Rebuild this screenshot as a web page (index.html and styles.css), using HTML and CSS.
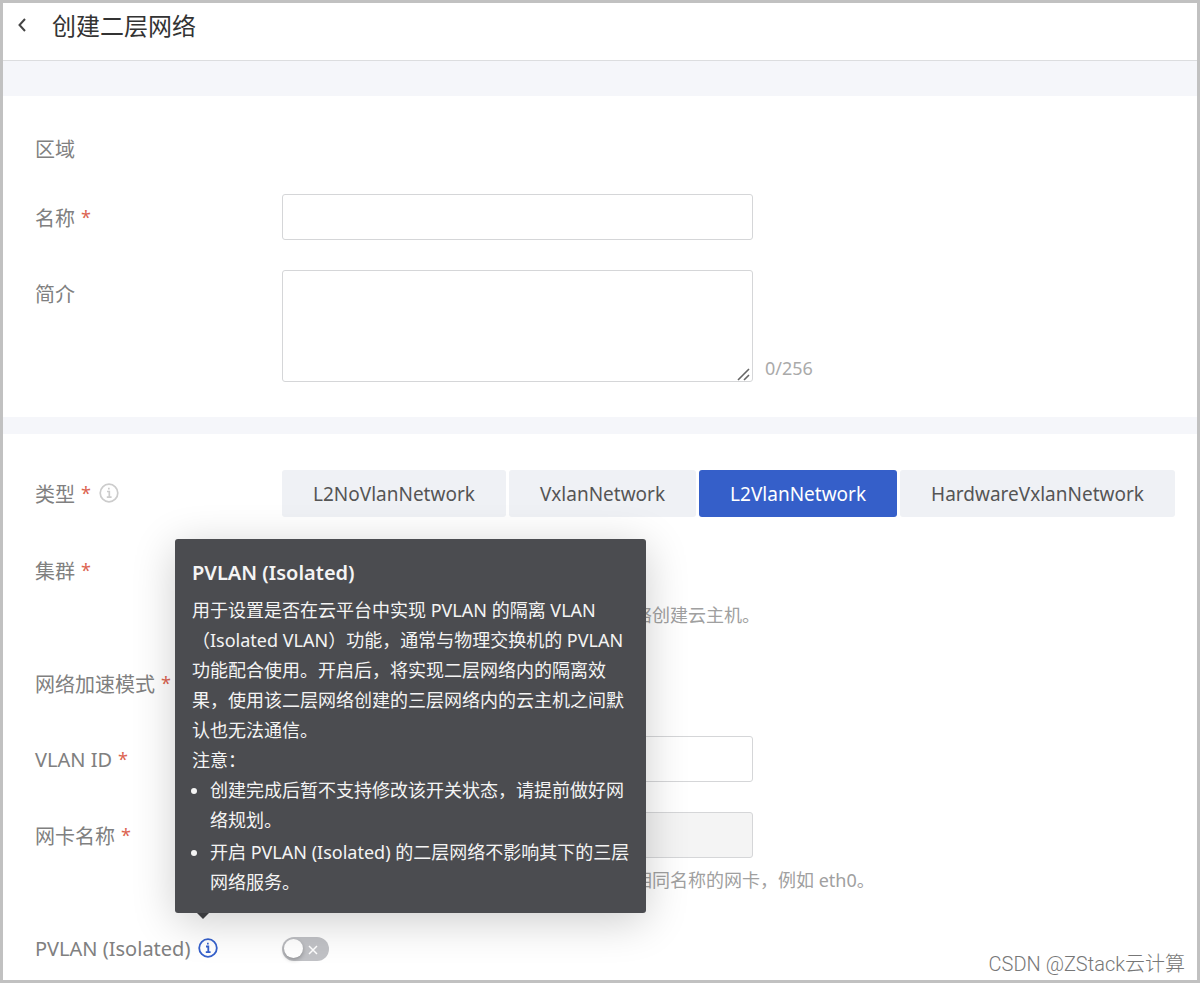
FILE: index.html
```html
<!DOCTYPE html>
<html lang="zh-CN">
<head>
<meta charset="utf-8">
<title>创建二层网络</title>
<link rel="stylesheet" href="styles.css">
</head>
<body>
<div class="page">
  <header class="header">
    <button class="back" type="button" aria-label="返回">
      <svg width="10" height="16" viewBox="0 0 10 16" fill="none" stroke="#444" stroke-width="2"><path d="M8 2 2.500 8 8 14"/></svg>
    </button>
    <h1 class="title">创建二层网络</h1>
  </header>
  <form class="form">
    <section class="section">
      <div class="row row-static">
        <span class="label">区域</span>
      </div>
      <div class="row">
        <label class="label" for="name">名称<span class="required">*</span></label>
        <div><input class="field" id="name" type="text"></div>
      </div>
      <div class="row">
        <label class="label" for="intro">简介</label>
        <div class="area-line">
          <div class="area-box">
            <textarea class="field area" id="intro"></textarea>
            <svg class="grip" width="14" height="14" viewBox="0 0 14 14" stroke="#666" stroke-width="1.600"><path d="M1 13 12 2M7 13l5-5"/></svg>
          </div>
          <span class="counter">0/256</span>
        </div>
      </div>
    </section>
    <section class="section">
      <div class="row">
        <span class="label">类型<span class="required">*</span>
          <svg class="info" width="20" height="20" viewBox="0 0 20 20" fill="none" stroke="#ccc" stroke-width="1.700"><circle cx="10" cy="10" r="8.800"/><path d="M8 8.500h2.300v5.500M7.800 14.200h4.800"/><path d="M9 5.700h1.700"/></svg>
        </span>
        <div class="types">
          <button class="type" type="button">L2NoVlanNetwork</button>
          <button class="type" type="button">VxlanNetwork</button>
          <button class="type type-active" type="button">L2VlanNetwork</button>
          <button class="type" type="button">HardwareVxlanNetwork</button>
        </div>
      </div>
      <div class="row">
        <span class="label">集群<span class="required">*</span></span>
        <div class="stack">
          <p class="hint">络创建云主机。</p>
        </div>
      </div>
      <div class="row">
        <span class="label">网络加速模式<span class="required">*</span></span>
      </div>
      <div class="row">
        <label class="label" for="vlan">VLAN ID<span class="required">*</span></label>
        <div><input class="field" id="vlan" type="text"></div>
      </div>
      <div class="row">
        <label class="label" for="nic">网卡名称<span class="required">*</span></label>
        <div class="stack">
          <input class="field" id="nic" type="text" disabled>
          <p class="hint">相同名称的网卡，例如 eth0。</p>
        </div>
      </div>
      <div class="row row-tip">
        <label class="label" for="pvlan">PVLAN (Isolated)
          <svg class="info" width="20" height="20" viewBox="0 0 20 20" fill="none" stroke="#3560cb" stroke-width="1.800"><circle cx="10" cy="10" r="8.800"/><path d="M8 8.500h2.300v5.500M7.800 14.200h4.800"/><path d="M9 5.700h1.700"/></svg>
        </label>
        <div class="switch-line">
          <span class="switch-box">
            <input class="switch" id="pvlan" type="checkbox" role="switch">
            <svg class="cross" width="10" height="10" viewBox="0 0 10 10" stroke="#fff" stroke-width="1.500"><path d="M1 1l8 8M9 1 1 9"/></svg>
          </span>
        </div>
        <div class="tip" role="tooltip">
          <h2 class="tip-title">PVLAN (Isolated)</h2>
          <p class="tip-text">用于设置是否在云平台中实现 PVLAN 的隔离 VLAN<br>（Isolated VLAN）功能，通常与物理交换机的 PVLAN<br>功能配合使用。开启后，将实现二层网络内的隔离效<br>果，使用该二层网络创建的三层网络内的云主机之间默<br>认也无法通信。<br>注意：</p>
          <ul class="tip-list">
            <li>创建完成后暂不支持修改该开关状态，请提前做好网<br>络规划。</li>
            <li>开启 PVLAN (Isolated) 的二层网络不影响其下的三层<br>网络服务。</li>
          </ul>
        </div>
      </div>
    </section>
  </form>
  <div class="watermark">CSDN @ZStack云计算</div>
</div>
</body>
</html>
```
FILE: styles.css
```css
* {
  box-sizing: border-box;
}

body {
  margin: 0;
  font-family: "Noto Sans", "Noto Sans CJK SC", sans-serif;
  font-size: 20px;
  color: #808080;
}

button,
input,
textarea {
  font: inherit;
}

.page {
  position: relative;
  display: flex;
  flex-direction: column;
  min-height: 100vh;
  border: 3px solid #c1c1c1;
  background: #fff;
}

.header {
  display: flex;
  align-items: center;
  gap: 20px;
  height: 58px;
  padding: 0 14px 12px;
  border-bottom: 1px solid #dcdddf;
}

.back {
  display: flex;
  padding: 0 0 2px;
  border: 0;
  background: none;
}

.title {
  margin: 0;
  padding-left: 5px;
  font-size: 24px;
  font-weight: 400;
  line-height: 32px;
  color: #333;
}

.form {
  display: flex;
  flex-direction: column;
  gap: 17px;
  flex: 1;
  padding-top: 35px;
  background: #f5f6fa;
}

.section {
  display: flex;
  flex-direction: column;
  gap: 30px;
  padding: 36px 25px 35px 32px;
  background: #fff;
}

.section:last-child {
  flex: 1;
  padding-bottom: 8px;
}

.row {
  display: grid;
  grid-template-columns: 247px 1fr;
  align-items: start;
}

.row-static .label {
  height: 32px;
}

.row-tip {
  position: relative;
}

.label {
  display: flex;
  align-items: center;
  height: 46px;
  white-space: nowrap;
}

.required {
  margin-left: 6px;
  font-size: 18px;
  color: #dc6450;
}

.info {
  margin-left: 8px;
}

.field {
  display: block;
  width: 471px;
  height: 46px;
  padding: 0 12px;
  border: 1px solid #d5d6d8;
  border-radius: 3px;
  background: #fff;
}

.field:disabled {
  background: #f4f4f4;
}

.area-line {
  display: flex;
  align-items: flex-end;
  gap: 12px;
}

.area-box {
  position: relative;
}

.area {
  height: 112px;
  padding: 12px;
  resize: none;
}

.grip {
  position: absolute;
  right: 2px;
  bottom: 1px;
}

.counter {
  font-size: 18px;
  line-height: 28px;
  color: #aaa;
}

.types {
  display: flex;
  gap: 3px;
}

.type {
  height: 47px;
  padding: 0 31px;
  border: 0;
  border-radius: 3px;
  background: #eff1f5;
  font-size: 19px;
  color: #555;
}

.type-active {
  background: #355fc9;
  color: #fff;
}

.stack {
  display: flex;
  flex-direction: column;
  justify-content: flex-end;
  min-height: 83px;
}

.hint {
  margin: 7px 0 0;
  padding-left: 352px;
  font-size: 18px;
  line-height: 30px;
  white-space: nowrap;
  color: #a0a0a0;
}

.switch-line {
  display: flex;
  align-items: center;
  height: 47px;
}

.switch-box {
  position: relative;
  display: flex;
}

.switch {
  appearance: none;
  display: flex;
  align-items: center;
  width: 47px;
  height: 24px;
  margin: 0;
  padding: 2px;
  border-radius: 12px;
  background: #c1c2c6;
}

.switch::before {
  content: "";
  width: 19px;
  height: 19px;
  border-radius: 50%;
  background: #fff;
  box-shadow: 0 2px 4px rgba(0, 0, 0, 0.25);
}

.cross {
  position: absolute;
  top: 8px;
  right: 11px;
}

.tip {
  position: absolute;
  left: 140px;
  bottom: calc(100% + 12px);
  width: 471px;
  padding: 19px 17px 16px;
  border-radius: 3px;
  background: #4b4c50;
  box-shadow: 0 8px 44px rgba(0, 0, 0, 0.2);
  font-size: 18px;
  line-height: 30px;
  white-space: nowrap;
  color: #f4f4f4;
}

.tip::after {
  content: "";
  position: absolute;
  left: 22px;
  top: 100%;
  border: 6px solid transparent;
  border-top-color: #3a3b3e;
  border-bottom: 0;
}

.tip-title {
  margin: 0 0 7px;
  font-size: 20px;
  font-weight: 600;
  line-height: 30px;
}

.tip-text {
  margin: 0;
}

.tip-list {
  margin: 0;
  padding-left: 18px;
}

.tip-list li + li {
  margin-top: 2px;
}

.watermark {
  position: absolute;
  right: 12px;
  bottom: 2px;
  font-family: Roboto, "Noto Sans CJK SC", sans-serif;
  font-size: 20px;
  font-weight: 300;
  line-height: 28px;
  color: #777;
}
```
